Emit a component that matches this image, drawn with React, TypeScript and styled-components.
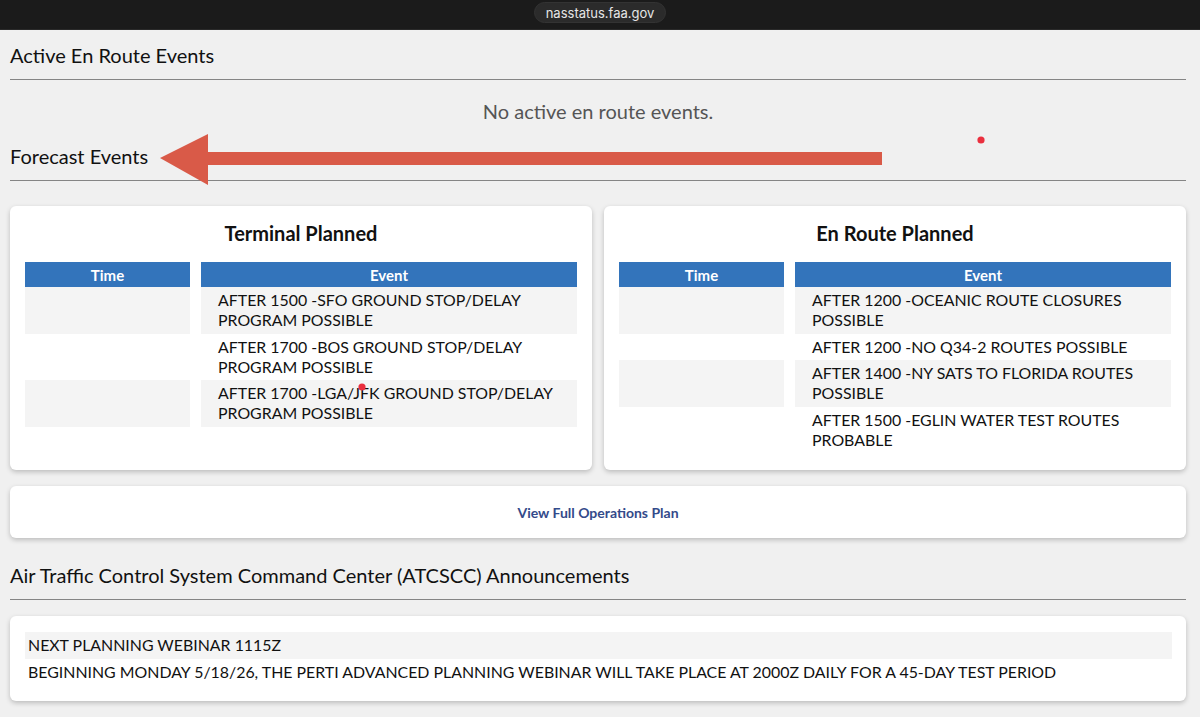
import React from "react";
import styled, { createGlobalStyle } from "styled-components";

const GlobalStyle = createGlobalStyle`
  html, body {
    margin: 0;
    padding: 0;
    background: #f0f0f0;
  }
  body {
    font-family: Lato, "Noto Sans", "Liberation Sans", sans-serif;
    color: #111;
  }
  * { box-sizing: border-box; }
`;

const TopBar = styled.header`
  height: 30px;
  background: #1b1b1b;
  display: flex;
  align-items: center;
  justify-content: center;
  border-bottom: 1px solid #2a2a2a;
`;

const UrlPill = styled.div`
  height: 21px;
  margin-top: -4px;
  padding: 0 11px;
  border-radius: 11px;
  background: #2b2b2b;
  border: 1px solid #333;
  color: #e6e6e6;
  font-family: Inter, "Liberation Sans", sans-serif;
  font-size: 13px;
  display: flex;
  align-items: center;
`;

const Page = styled.main`
  position: relative;
  padding: 13px 14px 16px 10px;
`;

const SectionHeading = styled.h2<{ $top: number }>`
  margin: ${(p) => p.$top}px 0 0;
  font-size: 20px;
  line-height: 24px;
  font-weight: 400;
  color: #111;
  padding-bottom: 12px;
  border-bottom: 1px solid #858585;
`;

const EmptyNote = styled.p`
  margin: 19px 0 0;
  font-size: 20px;
  line-height: 24px;
  color: #555;
  text-align: center;
`;

const CardRow = styled.div`
  margin-top: 25px;
  display: grid;
  grid-template-columns: 1fr 1fr;
  gap: 12px;
`;

const Card = styled.section<{ $top?: number }>`
  background: #fff;
  border-radius: 6px;
  box-shadow: 0 2px 5px rgba(0, 0, 0, 0.22);
  margin-top: ${(p) => p.$top ?? 0}px;
`;

const PlanCard = styled(Card)`
  padding: 15px 15px 17px;
`;

const CardTitle = styled.h3`
  margin: 0 0 17px;
  font-size: 20px;
  line-height: 24px;
  font-weight: 700;
  text-align: center;
`;

const Table = styled.table`
  border-collapse: separate;
  border-spacing: 11px 0;
  margin: 0 -11px;
  width: calc(100% + 22px);
  table-layout: fixed;
`;

const HeadCell = styled.th`
  background: #3374bb;
  color: #fff;
  font-size: 15px;
  font-weight: 700;
  height: 25px;
  padding: 0;
  text-align: center;
`;

const BodyRow = styled.tr<{ $striped: boolean }>`
  td {
    background: ${(p) => (p.$striped ? "#f4f4f4" : "#fff")};
  }
`;

const BodyCell = styled.td`
  font-size: 15.9px;
  line-height: 20px;
  padding: 3px 12px 3.5px 17px;
  vertical-align: top;
`;

const OpsLink = styled.a`
  display: flex;
  align-items: center;
  justify-content: center;
  height: 52px;
  font-size: 14px;
  font-weight: 700;
  color: #334a8a;
  text-decoration: none;
`;

const NoticeCard = styled(Card)`
  padding: 16px 14px 16px 15px;
`;

const NoticeRow = styled.div<{ $striped: boolean }>`
  background: ${(p) => (p.$striped ? "#f4f4f4" : "#fff")};
  font-size: 15.9px;
  line-height: 20px;
  padding: 3px 3px 3.5px;
`;

const Overlay = styled.svg`
  position: absolute;
  left: 0;
  top: 0;
  pointer-events: none;
  overflow: visible;
`;

type Row = { time: string; event: string };

const terminal: Row[] = [
  { time: "", event: "AFTER 1500 -SFO GROUND STOP/DELAY PROGRAM POSSIBLE" },
  { time: "", event: "AFTER 1700 -BOS GROUND STOP/DELAY PROGRAM POSSIBLE" },
  { time: "", event: "AFTER 1700 -LGA/JFK GROUND STOP/DELAY PROGRAM POSSIBLE" },
];

const enroute: Row[] = [
  { time: "", event: "AFTER 1200 -OCEANIC ROUTE CLOSURES POSSIBLE" },
  { time: "", event: "AFTER 1200 -NO Q34-2 ROUTES POSSIBLE" },
  { time: "", event: "AFTER 1400 -NY SATS TO FLORIDA ROUTES POSSIBLE" },
  { time: "", event: "AFTER 1500 -EGLIN WATER TEST ROUTES PROBABLE" },
];

const notices = [
  "NEXT PLANNING WEBINAR 1115Z",
  "BEGINNING MONDAY 5/18/26, THE PERTI ADVANCED PLANNING WEBINAR WILL TAKE PLACE AT 2000Z DAILY FOR A 45-DAY TEST PERIOD",
];

function PlannedTable({ title, rows }: { title: string; rows: Row[] }) {
  return (
    <PlanCard>
      <CardTitle>{title}</CardTitle>
      <Table>
        <colgroup>
          <col style={{ width: "30.5%" }} />
          <col />
        </colgroup>
        <thead>
          <tr>
            <HeadCell>Time</HeadCell>
            <HeadCell>Event</HeadCell>
          </tr>
        </thead>
        <tbody>
          {rows.map((r, i) => (
            <BodyRow key={i} $striped={i % 2 === 0}>
              <BodyCell>{r.time}</BodyCell>
              <BodyCell>{r.event}</BodyCell>
            </BodyRow>
          ))}
        </tbody>
      </Table>
    </PlanCard>
  );
}

export default function App() {
  return (
    <>
      <GlobalStyle />
      <TopBar>
        <UrlPill>nasstatus.faa.gov</UrlPill>
      </TopBar>
      <Page>
        <SectionHeading $top={0}>Active En Route Events</SectionHeading>
        <EmptyNote>No active en route events.</EmptyNote>
        <SectionHeading $top={21}>Forecast Events</SectionHeading>

        <CardRow>
          <PlannedTable title="Terminal Planned" rows={terminal} />
          <PlannedTable title="En Route Planned" rows={enroute} />
        </CardRow>

        <Card $top={16}>
          <OpsLink href="#">View Full Operations Plan</OpsLink>
        </Card>

        <SectionHeading $top={25}>
          Air Traffic Control System Command Center (ATCSCC) Announcements
        </SectionHeading>

        <NoticeCard $top={16}>
          {notices.map((n, i) => (
            <NoticeRow key={i} $striped={i % 2 === 0}>
              {n}
            </NoticeRow>
          ))}
        </NoticeCard>

        {/* pointer arrow and tap markers drawn over the page */}
        <Overlay width="1200" height="690">
          <polygon
            points="160,128 208,104 208,122 882,122 882,135 208,135 208,155"
            fill="#d95a48"
          />
          <circle cx="981" cy="110" r="3.6" fill="#ea2f3e" />
          <circle cx="362" cy="357" r="3.6" fill="#ea2f3e" />
        </Overlay>
      </Page>
    </>
  );
}
